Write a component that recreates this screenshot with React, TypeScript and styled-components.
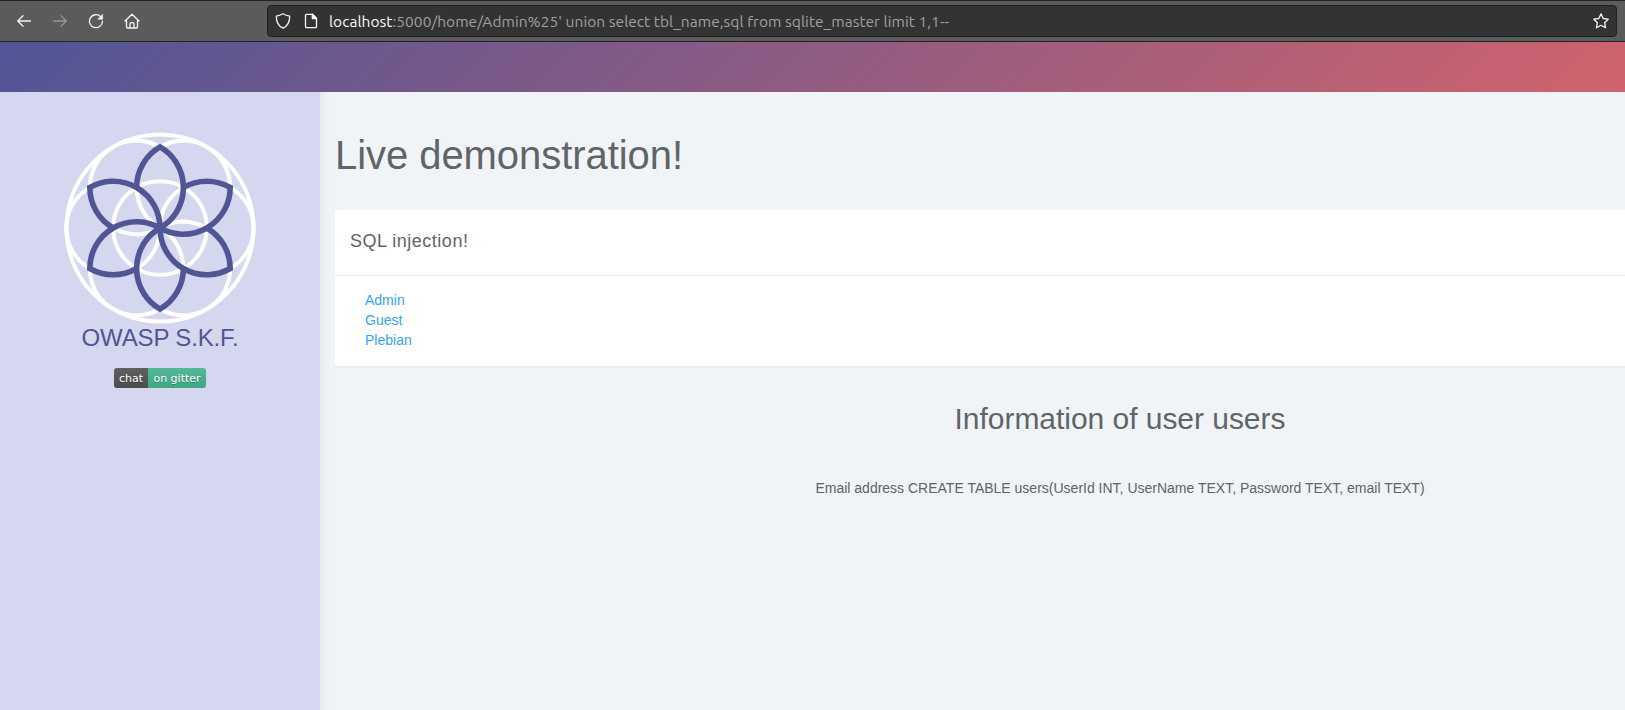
import React from "react";
import styled, { createGlobalStyle } from "styled-components";

const GlobalStyle = createGlobalStyle`
  * { box-sizing: border-box; }
  body {
    margin: 0;
    background: #f0f4f7;
    color: #5f6468;
    font: 14px/20px "Liberation Sans", Arial, sans-serif;
    overflow: hidden;
  }
`;

const Window = styled.div`
  display: flex;
  flex-direction: column;
  height: 710px;
  overflow: hidden;
`;

const Toolbar = styled.div`
  display: flex;
  align-items: center;
  flex: none;
  height: 42px;
  padding: 0 8px 0 16px;
  background: #5b5b5b;
  border-top: 1px solid #222;
  border-bottom: 1px solid #222;
`;

const NavButtons = styled.div`
  display: flex;
  gap: 20px;
  width: 251px;
`;

const Icon = styled.svg<{ $dim?: boolean }>`
  display: block;
  flex: none;
  width: 16px;
  height: 16px;
  fill: none;
  stroke: ${(p) => (p.$dim ? "#969696" : "#f4f4f4")};
  stroke-width: 1.3;
  stroke-linecap: round;
  stroke-linejoin: round;
`;

const UrlBar = styled.div`
  display: flex;
  align-items: center;
  flex: 1;
  height: 32px;
  padding: 0 7px;
  background: #333;
  border: 1px solid #202020;
  border-radius: 4px;
`;

const UrlIcons = styled.div`
  display: flex;
  gap: 12px;
  width: 54px;
`;

const Url = styled.div`
  flex: 1;
  padding-top: 1px;
  color: #a0a0a0;
  font: 15.5px/20px Ubuntu, "Noto Sans", sans-serif;
  letter-spacing: 0.04px;
  white-space: pre;
`;

const Host = styled.span`
  color: #fbfbfb;
`;

const Banner = styled.div`
  flex: none;
  height: 50px;
  background: linear-gradient(135deg, #505596 0%, #d0636d 100%);
`;

const Body = styled.div`
  display: flex;
  flex: 1;
  min-height: 0;
`;

const Sidebar = styled.aside`
  display: flex;
  flex-direction: column;
  align-items: center;
  flex: none;
  width: 320px;
  padding-top: 40px;
  background: #d5d7ee;
`;

const Logo = styled.svg`
  display: block;
  width: 192px;
  height: 192px;
  overflow: visible;
`;

const Brand = styled.div`
  margin-top: -1px;
  color: #505596;
  font-size: 24px;
  line-height: 30px;
  letter-spacing: -0.15px;
`;

const Badge = styled.div`
  display: flex;
  height: 20px;
  margin-top: 15px;
  border-radius: 3px;
  overflow: hidden;
  color: #fff;
  font: 11px/21px "DejaVu Sans", sans-serif;
  text-shadow: 0 1px 0 rgba(1, 1, 1, 0.3);
`;

const BadgePart = styled.span<{ $color: string; $width: number }>`
  width: ${(p) => p.$width}px;
  text-align: center;
  background: linear-gradient(rgba(187, 187, 187, 0.1), rgba(0, 0, 0, 0.1)), ${(p) => p.$color};
`;

const Main = styled.main`
  flex: 1;
  min-width: 0;
  padding: 0 0 0 15px;
  overflow: hidden;
  background: linear-gradient(90deg, #e7ebee 0, #f0f4f7 10px);
`;

const Content = styled.div`
  width: 1570px;
`;

const PageTitle = styled.h1`
  margin: 41px 0 33px;
  font-size: 40px;
  line-height: 44px;
  font-weight: 400;
  letter-spacing: -0.06px;
`;

const Card = styled.section`
  height: 156px;
  background: #fff;
  border-radius: 3px;
  box-shadow: 0 1px 2px rgba(0, 0, 0, 0.06);
`;

const CardTitle = styled.h2`
  height: 66px;
  margin: 0;
  padding: 21px 15px 0;
  border-bottom: 1px solid #e6eaed;
  font-size: 18px;
  line-height: 20px;
  font-weight: 400;
  letter-spacing: 0.5px;
`;

const Links = styled.nav`
  display: flex;
  flex-direction: column;
  align-items: flex-start;
  padding: 14px 30px;
`;

const UserLink = styled.a`
  color: #33a4fb;
  text-decoration: none;
`;

const Result = styled.div`
  text-align: center;
`;

const ResultTitle = styled.h3`
  margin: 36px 0 41px;
  font-size: 30px;
  line-height: 33px;
  font-weight: 400;
  letter-spacing: -0.04px;
`;

const ResultText = styled.p`
  margin: 0;
  padding-top: 2px;
`;

const R = 46.8;
const H = (R * Math.sqrt(3)) / 2;
const angles = [0, 60, 120, 180, 240, 300];
const petal = `M${-R / 2} ${-H} A${R} ${R} 0 0 1 0 ${-2 * H} A${R} ${R} 0 0 1 0 0`;

const FlowerLogo = () => (
  <Logo viewBox="-96 -96 192 192" fill="none">
    <g stroke="#fff" strokeWidth="4">
      <circle r={R * 2} />
      <circle r={R} />
      {angles.map((a) => (
        <circle key={a} cx={R} r={R} transform={`rotate(${a})`} />
      ))}
    </g>
    <g stroke="#505596" strokeWidth="5.6">
      {angles.map((a) => (
        <path key={a} d={petal} transform={`rotate(${a})`} />
      ))}
    </g>
  </Logo>
);

export default function App() {
  return (
    <Window>
      <GlobalStyle />
      <Toolbar>
        <NavButtons>
          <Icon viewBox="0 0 16 16"><path d="M14.5 8H1.700M7 2.700 1.700 8 7 13.300" /></Icon>
          <Icon viewBox="0 0 16 16" $dim><path d="M1.500 8h12.800M9 2.700 14.300 8 9 13.300" /></Icon>
          <Icon viewBox="0 0 16 16">
            <path d="M12.600 3.600A6.500 6.500 0 1 0 14.500 8.200" />
            <path d="M14.600 1.500v4.700H10z" fill="#f4f4f4" strokeWidth="0.6" />
          </Icon>
          <Icon viewBox="0 0 16 16">
            <path d="M1 8 8 1.200 15 8M2.500 7v7a1 1 0 0 0 1 1h9a1 1 0 0 0 1-1V7M6 15v-4a1.300 1.300 0 0 1 1.300-1.300h1.400A1.300 1.300 0 0 1 10 11v4" />
          </Icon>
        </NavButtons>
        <UrlBar>
          <UrlIcons>
            <Icon viewBox="0 0 16 16">
              <path d="M8 .8C6 2 3.800 2.800 1.300 3.200c0 5.600 1.600 9.600 6.700 12 5.100-2.400 6.700-6.400 6.700-12C12.200 2.800 10 2 8 .8z" />
            </Icon>
            <Icon viewBox="0 0 16 16">
              <path d="M3.500 1.300h6l4 4v8.400a1 1 0 0 1-1 1h-9a1 1 0 0 1-1-1V2.300a1 1 0 0 1 1-1z" />
              <path d="M9.300 1.300v4.200h4.200z" fill="#f4f4f4" />
            </Icon>
          </UrlIcons>
          <Url>
            <Host>localhost</Host>:5000/home/Admin%25' union select tbl_name,sql from sqlite_master limit 1,1--
          </Url>
          <Icon viewBox="0 0 16 16">
            <path d="m8 .9 2.200 4.600 5 .7-3.600 3.500.9 5L8 12.300l-4.500 2.400.9-5L.8 6.200l5-.7z" />
          </Icon>
        </UrlBar>
      </Toolbar>
      <Banner />
      <Body>
        <Sidebar>
          <FlowerLogo />
          <Brand>OWASP S.K.F.</Brand>
          <Badge>
            <BadgePart $color="#555" $width={34}>chat</BadgePart>
            <BadgePart $color="#46b894" $width={58}>on gitter</BadgePart>
          </Badge>
        </Sidebar>
        <Main>
          <Content>
            <PageTitle>Live demonstration!</PageTitle>
            <Card>
              <CardTitle>SQL injection!</CardTitle>
              <Links>
                <UserLink>Admin</UserLink>
                <UserLink>Guest</UserLink>
                <UserLink>Plebian</UserLink>
              </Links>
            </Card>
            <Result>
              <ResultTitle>Information of user users</ResultTitle>
              <ResultText>
                Email address CREATE TABLE users(UserId INT, UserName TEXT, Password TEXT, email TEXT)
              </ResultText>
            </Result>
          </Content>
        </Main>
      </Body>
    </Window>
  );
}
